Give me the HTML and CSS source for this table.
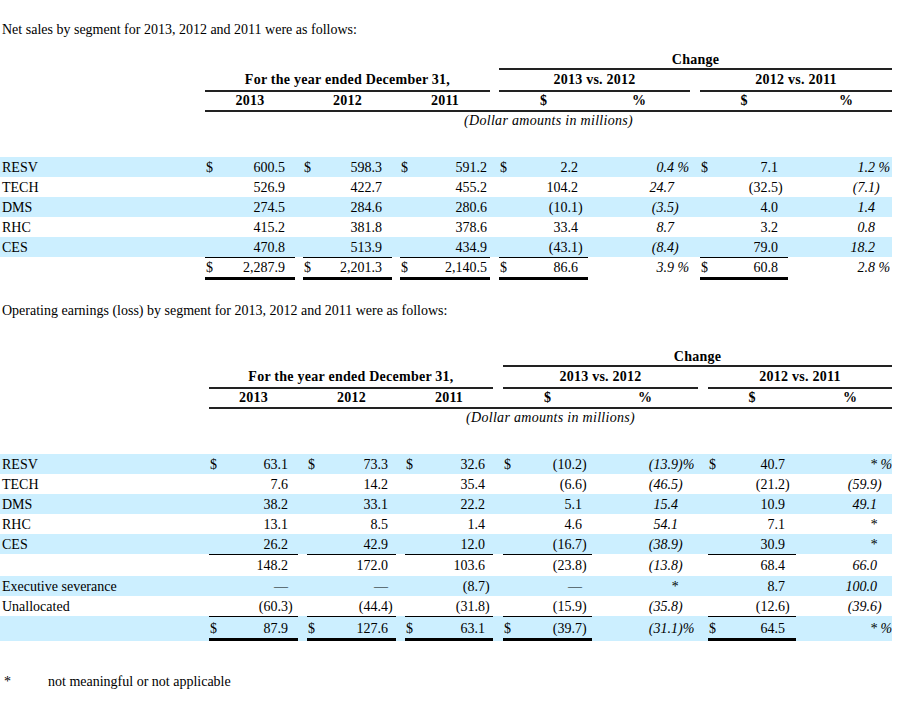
FILE: index.html
```html
<!DOCTYPE html>
<html>
<head>
<meta charset="utf-8">
<link rel="stylesheet" href="styles.css">
</head>
<body>
<p class="intro intro1">Net sales by segment for 2013, 2012 and 2011 were as follows:</p>

<table class="fin t1">
<colgroup>
<col class="lab"><col class="d1"><col class="v1"><col class="s1"><col class="g1"><col class="d2"><col class="v2"><col class="s2"><col class="g2"><col class="d3"><col class="v3"><col class="s3"><col class="g3"><col class="d4"><col class="v4"><col class="s4"><col class="p1"><col class="q1"><col class="g4"><col class="d5"><col class="v5"><col class="s5"><col class="p2"><col class="q2">
</colgroup>
<tr class="hr hr1"><td colspan="13"></td><td colspan="11" class="hd bb">Change</td></tr>
<tr class="hr hr2"><td></td><td colspan="11" class="hd bb">For the year ended December 31,</td><td></td><td colspan="5" class="hd bb">2013 vs. 2012</td><td></td><td colspan="5" class="hd bb">2012 vs. 2011</td></tr>
<tr class="hr hr3"><td></td><td colspan="3" class="hd bb">2013</td><td class="bb"></td><td colspan="3" class="hd bb">2012</td><td class="bb"></td><td colspan="3" class="hd bb">2011</td><td class="bb"></td><td colspan="3" class="hd bb">$</td><td colspan="2" class="hd bb">%</td><td class="bb"></td><td colspan="3" class="hd bb">$</td><td colspan="2" class="hd bb pc2">%</td></tr>
<tr class="hr hr4"><td></td><td colspan="23" class="note">(Dollar amounts in millions)</td></tr>
<tr class="sp"><td colspan="24"></td></tr>

<tr class="row blue"><td class="lb">RESV</td><td class="d">$</td><td class="v">600.5</td><td class="s"></td><td></td><td class="d">$</td><td class="v">598.3</td><td class="s"></td><td></td><td class="d">$</td><td class="v">591.2</td><td class="s"></td><td></td><td class="d">$</td><td class="v">2.2</td><td class="s"></td><td class="p">0.4</td><td class="q">&nbsp;%</td><td></td><td class="d">$</td><td class="v">7.1</td><td class="s"></td><td class="p">1.2</td><td class="q">&nbsp;%</td></tr>
<tr class="row"><td class="lb">TECH</td><td class="d"></td><td class="v">526.9</td><td class="s"></td><td></td><td class="d"></td><td class="v">422.7</td><td class="s"></td><td></td><td class="d"></td><td class="v">455.2</td><td class="s"></td><td></td><td class="d"></td><td class="v">104.2</td><td class="s"></td><td class="p">24.7</td><td class="q"></td><td></td><td class="d"></td><td class="v">(32.5</td><td class="s">)</td><td class="p">(7.1</td><td class="q">)</td></tr>
<tr class="row blue"><td class="lb">DMS</td><td class="d"></td><td class="v">274.5</td><td class="s"></td><td></td><td class="d"></td><td class="v">284.6</td><td class="s"></td><td></td><td class="d"></td><td class="v">280.6</td><td class="s"></td><td></td><td class="d"></td><td class="v">(10.1</td><td class="s">)</td><td class="p">(3.5</td><td class="q">)</td><td></td><td class="d"></td><td class="v">4.0</td><td class="s"></td><td class="p">1.4</td><td class="q"></td></tr>
<tr class="row"><td class="lb">RHC</td><td class="d"></td><td class="v">415.2</td><td class="s"></td><td></td><td class="d"></td><td class="v">381.8</td><td class="s"></td><td></td><td class="d"></td><td class="v">378.6</td><td class="s"></td><td></td><td class="d"></td><td class="v">33.4</td><td class="s"></td><td class="p">8.7</td><td class="q"></td><td></td><td class="d"></td><td class="v">3.2</td><td class="s"></td><td class="p">0.8</td><td class="q"></td></tr>
<tr class="row blue"><td class="lb">CES</td><td class="d"></td><td class="v">470.8</td><td class="s"></td><td></td><td class="d"></td><td class="v">513.9</td><td class="s"></td><td></td><td class="d"></td><td class="v">434.9</td><td class="s"></td><td></td><td class="d"></td><td class="v">(43.1</td><td class="s">)</td><td class="p">(8.4</td><td class="q">)</td><td></td><td class="d"></td><td class="v">79.0</td><td class="s"></td><td class="p">18.2</td><td class="q"></td></tr>
<tr class="row total"><td class="lb"></td><td class="d tt">$</td><td class="v tt">2,287.9</td><td class="s tt"></td><td></td><td class="d tt">$</td><td class="v tt">2,201.3</td><td class="s tt"></td><td></td><td class="d tt">$</td><td class="v tt">2,140.5</td><td class="s tt"></td><td></td><td class="d tt">$</td><td class="v tt">86.6</td><td class="s tt"></td><td class="p">3.9</td><td class="q">&nbsp;%</td><td></td><td class="d tt">$</td><td class="v tt">60.8</td><td class="s tt"></td><td class="p">2.8</td><td class="q">&nbsp;%</td></tr>
</table>

<p class="intro intro2">Operating earnings (loss) by segment for 2013, 2012 and 2011 were as follows:</p>

<table class="fin t2">
<colgroup>
<col class="lab"><col class="d1"><col class="v1"><col class="s1"><col class="g1"><col class="d2"><col class="v2"><col class="s2"><col class="g2"><col class="d3"><col class="v3"><col class="s3"><col class="g3"><col class="d4"><col class="v4"><col class="s4"><col class="p1"><col class="q1"><col class="g4"><col class="d5"><col class="v5"><col class="s5"><col class="p2"><col class="q2">
</colgroup>
<tr class="hr hr1"><td colspan="13"></td><td colspan="11" class="hd bb">Change</td></tr>
<tr class="hr hr2"><td></td><td colspan="11" class="hd bb">For the year ended December 31,</td><td></td><td colspan="5" class="hd bb">2013 vs. 2012</td><td></td><td colspan="5" class="hd bb">2012 vs. 2011</td></tr>
<tr class="hr hr3"><td></td><td colspan="3" class="hd bb">2013</td><td class="bb"></td><td colspan="3" class="hd bb">2012</td><td class="bb"></td><td colspan="3" class="hd bb">2011</td><td class="bb"></td><td colspan="3" class="hd bb">$</td><td colspan="2" class="hd bb">%</td><td class="bb"></td><td colspan="3" class="hd bb">$</td><td colspan="2" class="hd bb pc2">%</td></tr>
<tr class="hr hr4"><td></td><td colspan="23" class="note">(Dollar amounts in millions)</td></tr>
<tr class="sp"><td colspan="24"></td></tr>

<tr class="row blue"><td class="lb">RESV</td><td class="d">$</td><td class="v">63.1</td><td class="s"></td><td></td><td class="d">$</td><td class="v">73.3</td><td class="s"></td><td></td><td class="d">$</td><td class="v">32.6</td><td class="s"></td><td></td><td class="d">$</td><td class="v">(10.2</td><td class="s">)</td><td class="p">(13.9</td><td class="q">)%</td><td></td><td class="d">$</td><td class="v">40.7</td><td class="s"></td><td class="p">*</td><td class="q">&nbsp;%</td></tr>
<tr class="row"><td class="lb">TECH</td><td class="d"></td><td class="v">7.6</td><td class="s"></td><td></td><td class="d"></td><td class="v">14.2</td><td class="s"></td><td></td><td class="d"></td><td class="v">35.4</td><td class="s"></td><td></td><td class="d"></td><td class="v">(6.6</td><td class="s">)</td><td class="p">(46.5</td><td class="q">)</td><td></td><td class="d"></td><td class="v">(21.2</td><td class="s">)</td><td class="p">(59.9</td><td class="q">)</td></tr>
<tr class="row blue"><td class="lb">DMS</td><td class="d"></td><td class="v">38.2</td><td class="s"></td><td></td><td class="d"></td><td class="v">33.1</td><td class="s"></td><td></td><td class="d"></td><td class="v">22.2</td><td class="s"></td><td></td><td class="d"></td><td class="v">5.1</td><td class="s"></td><td class="p">15.4</td><td class="q"></td><td></td><td class="d"></td><td class="v">10.9</td><td class="s"></td><td class="p">49.1</td><td class="q"></td></tr>
<tr class="row"><td class="lb">RHC</td><td class="d"></td><td class="v">13.1</td><td class="s"></td><td></td><td class="d"></td><td class="v">8.5</td><td class="s"></td><td></td><td class="d"></td><td class="v">1.4</td><td class="s"></td><td></td><td class="d"></td><td class="v">4.6</td><td class="s"></td><td class="p">54.1</td><td class="q"></td><td></td><td class="d"></td><td class="v">7.1</td><td class="s"></td><td class="p">*</td><td class="q"></td></tr>
<tr class="row blue"><td class="lb">CES</td><td class="d"></td><td class="v">26.2</td><td class="s"></td><td></td><td class="d"></td><td class="v">42.9</td><td class="s"></td><td></td><td class="d"></td><td class="v">12.0</td><td class="s"></td><td></td><td class="d"></td><td class="v">(16.7</td><td class="s">)</td><td class="p">(38.9</td><td class="q">)</td><td></td><td class="d"></td><td class="v">30.9</td><td class="s"></td><td class="p">*</td><td class="q"></td></tr>
<tr class="row sub"><td class="lb"></td><td class="d tl"></td><td class="v tl">148.2</td><td class="s tl"></td><td></td><td class="d tl"></td><td class="v tl">172.0</td><td class="s tl"></td><td></td><td class="d tl"></td><td class="v tl">103.6</td><td class="s tl"></td><td></td><td class="d tl"></td><td class="v tl">(23.8</td><td class="s tl">)</td><td class="p">(13.8</td><td class="q">)</td><td></td><td class="d tl"></td><td class="v tl">68.4</td><td class="s tl"></td><td class="p">66.0</td><td class="q"></td></tr>
<tr class="row blue"><td class="lb">Executive severance</td><td class="d"></td><td class="v">—</td><td class="s"></td><td></td><td class="d"></td><td class="v">—</td><td class="s"></td><td></td><td class="d"></td><td class="v">(8.7</td><td class="s">)</td><td></td><td class="d"></td><td class="v">—</td><td class="s"></td><td class="p">*</td><td class="q"></td><td></td><td class="d"></td><td class="v">8.7</td><td class="s"></td><td class="p">100.0</td><td class="q"></td></tr>
<tr class="row"><td class="lb">Unallocated</td><td class="d"></td><td class="v">(60.3</td><td class="s">)</td><td></td><td class="d"></td><td class="v">(44.4</td><td class="s">)</td><td></td><td class="d"></td><td class="v">(31.8</td><td class="s">)</td><td></td><td class="d"></td><td class="v">(15.9</td><td class="s">)</td><td class="p">(35.8</td><td class="q">)</td><td></td><td class="d"></td><td class="v">(12.6</td><td class="s">)</td><td class="p">(39.6</td><td class="q">)</td></tr>
<tr class="row total total2 blue"><td class="lb"></td><td class="d tt">$</td><td class="v tt">87.9</td><td class="s tt"></td><td></td><td class="d tt">$</td><td class="v tt">127.6</td><td class="s tt"></td><td></td><td class="d tt">$</td><td class="v tt">63.1</td><td class="s tt"></td><td></td><td class="d tt">$</td><td class="v tt">(39.7</td><td class="s tt">)</td><td class="p">(31.1</td><td class="q">)%</td><td></td><td class="d tt">$</td><td class="v tt">64.5</td><td class="s tt"></td><td class="p">*</td><td class="q">&nbsp;%</td></tr>
</table>

<div class="foot"><span class="star">*</span><span>not meaningful or not applicable</span></div>
</body>
</html>
```

FILE: styles.css
```css
html, body {
  margin: 0;
  padding: 0;
  background: #fff;
}
body {
  font-family: "Liberation Serif", "Times New Roman", serif;
  font-size: 14px;
  line-height: 16px;
  color: #000;
}
.intro {
  margin: 0;
  padding-left: 2px;
  line-height: 16px;
}
.intro1 {
  padding-top: 22px;
  margin-bottom: 12px;
}
.intro2 {
  margin-top: 23px;
  margin-bottom: 28px;
}
.fin {
  width: 892px;
  table-layout: fixed;
  border-collapse: separate;
  border-spacing: 0;
}
.fin td {
  padding: 0;
  white-space: nowrap;
  overflow: visible;
}
.fin tr { vertical-align: baseline; }

/* column widths - table 1 */
.t1 .lab { width: 205px; }
.t1 .d1 { width: 10px; } .t1 .v1 { width: 70px; } .t1 .s1 { width: 10px; } .t1 .g1 { width: 8px; }
.t1 .d2 { width: 10px; } .t1 .v2 { width: 69px; } .t1 .s2 { width: 10px; } .t1 .g2 { width: 8px; }
.t1 .d3 { width: 10px; } .t1 .v3 { width: 77px; } .t1 .s3 { width: 3px; } .t1 .g3 { width: 9px; }
.t1 .d4 { width: 10px; } .t1 .v4 { width: 69px; } .t1 .s4 { width: 10px; }
.t1 .p1 { width: 86px; } .t1 .q1 { width: 16px; } .t1 .g4 { width: 10px; }
.t1 .d5 { width: 10px; } .t1 .v5 { width: 68px; } .t1 .s5 { width: 10px; }
.t1 .p2 { width: 87px; } .t1 .q2 { width: 17px; }

/* column widths - table 2 */
.t2 .lab { width: 209px; }
.t2 .d1 { width: 10px; } .t2 .v1 { width: 69px; } .t2 .s1 { width: 10px; } .t2 .g1 { width: 9px; }
.t2 .d2 { width: 10px; } .t2 .v2 { width: 71px; } .t2 .s2 { width: 8px; } .t2 .g2 { width: 9px; }
.t2 .d3 { width: 10px; } .t2 .v3 { width: 70px; } .t2 .s3 { width: 8px; } .t2 .g3 { width: 10px; }
.t2 .d4 { width: 10px; } .t2 .v4 { width: 69px; } .t2 .s4 { width: 10px; }
.t2 .p1 { width: 86px; } .t2 .q1 { width: 20px; } .t2 .g4 { width: 10px; }
.t2 .d5 { width: 10px; } .t2 .v5 { width: 67px; } .t2 .s5 { width: 11px; }
.t2 .p2 { width: 81px; } .t2 .q2 { width: 15px; }

/* header rows */
.hr td { line-height: 16px; }
.hd {
  font-weight: bold;
  text-align: center;
  letter-spacing: 0.25px;
}
.hd.pc2 { padding-left: 12px; }
.bb { border-bottom: 2px solid #222; }
.hr1 td { padding-top: 2px; }
.hr2 td { padding-top: 2px; padding-bottom: 2px; }
.hr3 td { padding-top: 1px; padding-bottom: 1px; }
.hr4 td { padding-top: 1px; }
.note {
  text-align: center;
  font-style: italic;
  letter-spacing: 0.3px;
}
.sp td { height: 28px; }

/* data rows */
.row td {
  line-height: 19px;
  padding-top: 1px;
}
.row.blue td { background: #ccefff; }
.lb { padding-left: 2px !important; }
.d { text-align: left; padding-left: 1px !important; }
.v { text-align: right; }
.s { text-align: left; }
.p { text-align: right; font-style: italic; }
.q { text-align: left; font-style: italic; }

.row.sub td { padding-top: 0; line-height: 21px; }
.tl { border-top: 1px solid #000; }

.row.total td { padding-top: 0; line-height: 19px; }
.row.total2 td { padding-top: 2px; }
.tt {
  border-top: 1px solid #000;
  border-bottom: 3px solid #000;
}

.foot {
  display: flex;
  margin-top: 33px;
  line-height: 16px;
}
.star {
  width: 48px;
  padding-left: 4px;
  box-sizing: border-box;
}
```
